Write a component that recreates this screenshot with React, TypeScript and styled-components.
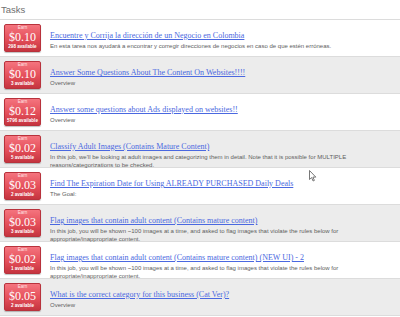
import React from "react";
import styled, { createGlobalStyle } from "styled-components";

const Global = createGlobalStyle`
  html, body { margin: 0; padding: 0; background: #ffffff; }
  body { width: 400px; height: 317px; overflow: hidden; font-family: "Liberation Sans", Arial, sans-serif; }
`;

const Page = styled.div`
  position: relative;
  width: 400px;
  height: 317px;
  overflow: hidden;
  background: #ffffff;
`;

const Header = styled.div`
  height: 19px;
  border-bottom: 1px solid #dcdcdc;
  display: flex;
  align-items: center;
  padding-left: 1px;
  font-family: "Liberation Sans", Arial, sans-serif;
  font-size: 9.5px;
  color: #707070;
`;

const Row = styled.div<{ $alt: boolean }>`
  height: 37px;
  box-sizing: border-box;
  border-bottom: 1px solid #dcdcdc;
  background: ${(p) => (p.$alt ? "#ececec" : "#ffffff")};
  display: flex;
  align-items: flex-start;
  gap: 9px;
  padding: 4px 0 0 4px;
`;

const Badge = styled.div`
  flex: none;
  width: 37px;
  height: 28px;
  box-sizing: border-box;
  border-radius: 2px;
  border: 1px solid #b8323c;
  background: linear-gradient(to bottom, #f4747e 0%, #e44e59 55%, #c5343f 100%);
  box-shadow: 0 1px 1px rgba(0, 0, 0, 0.25);
  display: flex;
  flex-direction: column;
  align-items: center;
  color: #ffffff;
  text-align: center;
`;

const Earn = styled.div`
  font-family: "Liberation Sans", Arial, sans-serif;
  font-size: 4.5px;
  line-height: 6px;
  color: #ffe4e6;
`;

const Price = styled.div`
  font-family: "Liberation Serif", "Times New Roman", serif;
  font-size: 12px;
  line-height: 12px;
`;

const Avail = styled.div`
  font-family: "Liberation Sans", Arial, sans-serif;
  font-size: 4.6px;
  line-height: 7px;
  font-weight: bold;
`;

const Info = styled.div`
  width: 302px;
  display: flex;
  flex-direction: column;
`;

const Title = styled.a`
  font-family: "Liberation Serif", "Times New Roman", serif;
  font-size: 8px;
  line-height: 10px;
  color: #4a68e0;
  text-decoration: underline;
  white-space: nowrap;
`;

const Desc = styled.div`
  font-family: "Liberation Sans", Arial, sans-serif;
  font-size: 6px;
  line-height: 8px;
  color: #5e5e5e;
`;

const Cursor = styled.svg`
  position: absolute;
  left: 309px;
  top: 170px;
`;

type Task = { price: string; avail: string; title: string; desc: string };

const tasks: Task[] = [
  {
    price: "$0.10",
    avail: "298 available",
    title: "Encuentre y Corrija la dirección de un Negocio en Colombia",
    desc: "En esta tarea nos ayudará a encontrar y corregir direcciones de negocios en caso de que estén erróneas.",
  },
  { price: "$0.10", avail: "3 available", title: "Answer Some Questions About The Content On Websites!!!!", desc: "Overview" },
  { price: "$0.12", avail: "5796 available", title: "Answer some questions about Ads displayed on websites!!", desc: "Overview" },
  {
    price: "$0.02",
    avail: "5 available",
    title: "Classify Adult Images (Contains Mature Content)",
    desc: "In this job, we'll be looking at adult images and categorizing them in detail. Note that it is possible for MULTIPLE reasons/categorizations to be checked.",
  },
  { price: "$0.03", avail: "2 available", title: "Find The Expiration Date for Using ALREADY PURCHASED Daily Deals", desc: "The Goal:" },
  {
    price: "$0.03",
    avail: "3 available",
    title: "Flag images that contain adult content (Contains mature content)",
    desc: "In this job, you will be shown ~100 images at a time, and asked to flag images that violate the rules below for appropriate/inappropriate content.",
  },
  {
    price: "$0.02",
    avail: "1 available",
    title: "Flag images that contain adult content (Contains mature content) (NEW UI) - 2",
    desc: "In this job, you will be shown ~100 images at a time, and asked to flag images that violate the rules below for appropriate/inappropriate content.",
  },
  { price: "$0.05", avail: "2 available", title: "What is the correct category for this business (Cat Ver)?", desc: "Overview" },
];

export default function App() {
  return (
    <Page>
      <Global />
      <Header>Tasks</Header>
      {tasks.map((t, i) => (
        <Row key={i} $alt={i % 2 === 1}>
          <Badge>
            <Earn>Earn</Earn>
            <Price>{t.price}</Price>
            <Avail>{t.avail}</Avail>
          </Badge>
          <Info>
            <div>
              <Title href="#">{t.title}</Title>
            </div>
            <Desc>{t.desc}</Desc>
          </Info>
        </Row>
      ))}
      <Cursor width="8" height="12" viewBox="0 0 8 12">
        <path d="M0.5 0.5 L0.5 9.5 L2.6 7.6 L4.1 11 L5.4 10.4 L3.9 7.1 L6.8 7.1 Z" fill="#ffffff" stroke="#555555" strokeWidth="0.8" />
      </Cursor>
    </Page>
  );
}
